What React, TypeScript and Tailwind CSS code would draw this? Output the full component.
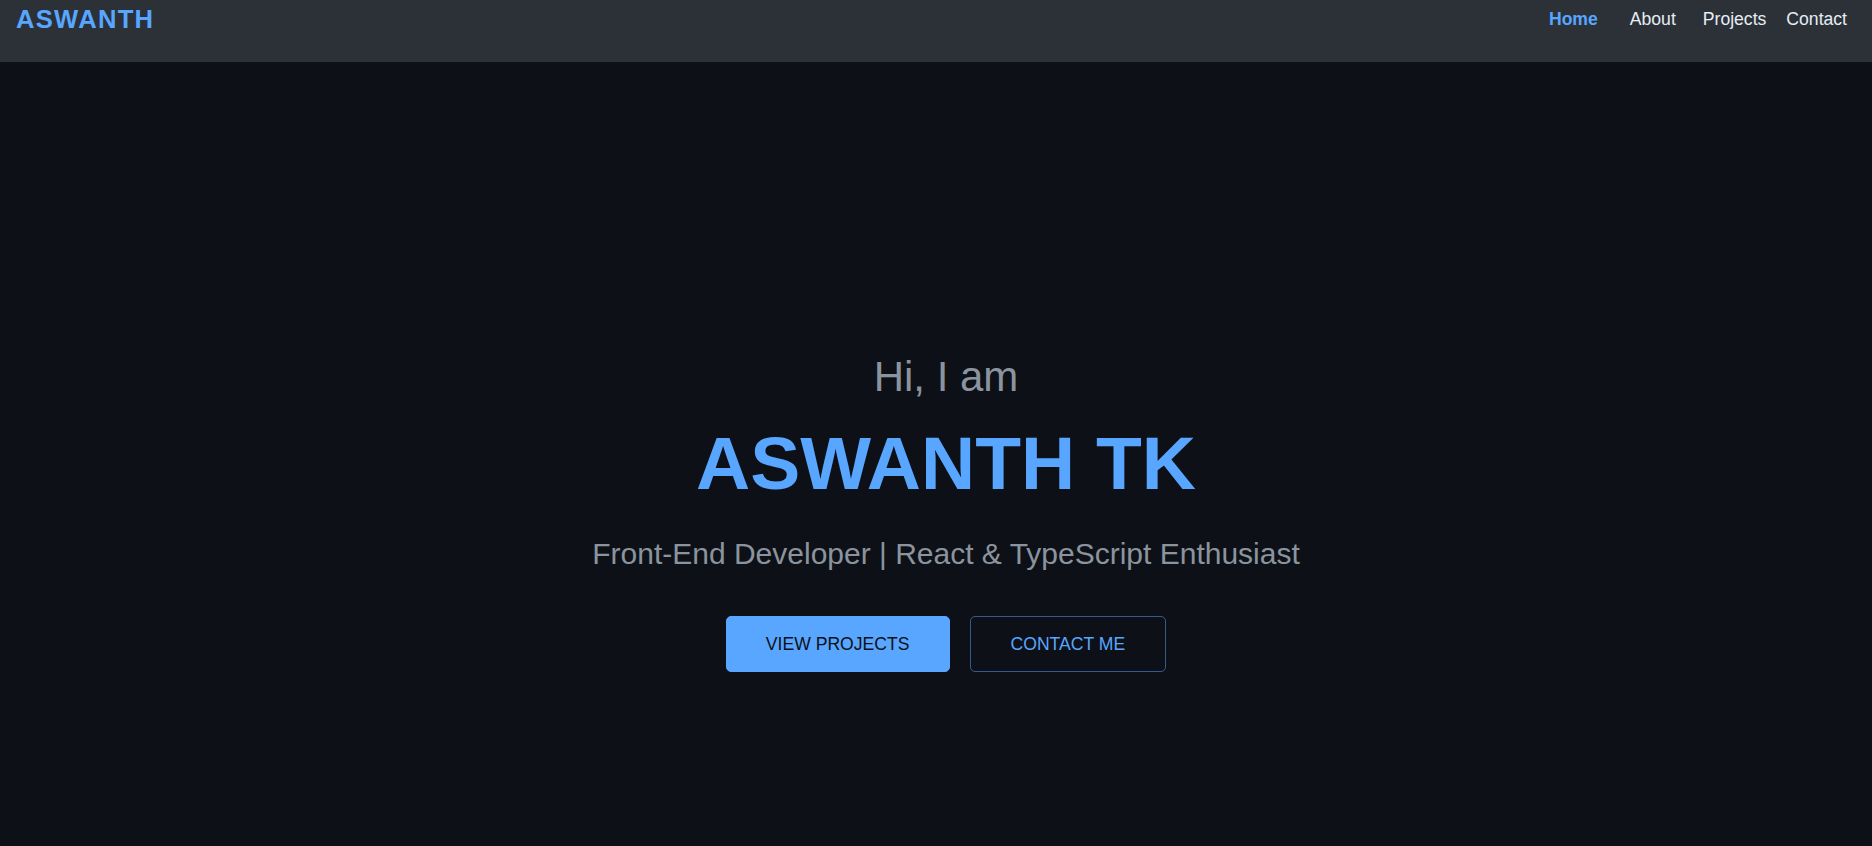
export default function App() {
  const font = "font-['Liberation_Sans',Arial,sans-serif]";

  return (
    <div className={`min-h-screen bg-[#0d1117] ${font}`}>
      <header className="h-[62px] bg-[#2c3138] pl-4 pr-[25px] pt-[5px] flex items-start justify-between">
        <div className="text-[25.6px] leading-[29px] font-bold tracking-[0.05em] text-[#58a6ff]">
          ASWANTH
        </div>
        <nav className="mt-[4px] flex text-[17.6px] leading-[20px] text-[#e6edf3]">
          <a className="font-bold text-[#58a6ff]">Home</a>
          <a className="ml-[32px]">About</a>
          <a className="ml-[27px]">Projects</a>
          <a className="ml-[20px]">Contact</a>
        </nav>
      </header>

      <section className="pl-5 pt-[291px] flex flex-col items-center text-center">
        <h2 className="text-[42px] leading-[48px] text-[#8b949e]">Hi, I am</h2>
        <h1 className="mt-[22px] text-[75px] leading-[80px] font-bold text-[#58a6ff]">
          ASWANTH TK
        </h1>
        <p className="mt-[33px] text-[30px] leading-[36px] text-[#8b949e]">
          Front-End Developer | React &amp; TypeScript Enthusiast
        </p>
        <div className="mt-[44px] flex gap-5">
          <button className="rounded-[5px] border border-[#58a6ff] bg-[#58a6ff] px-[39px] py-[17px] text-[17.6px] leading-[20px] text-[#0d1117]">
            VIEW PROJECTS
          </button>
          <button className="rounded-[5px] border border-[#325b8b] bg-transparent px-10 py-[17px] text-[17.6px] leading-[20px] text-[#58a6ff]">
            CONTACT ME
          </button>
        </div>
      </section>
    </div>
  );
}
